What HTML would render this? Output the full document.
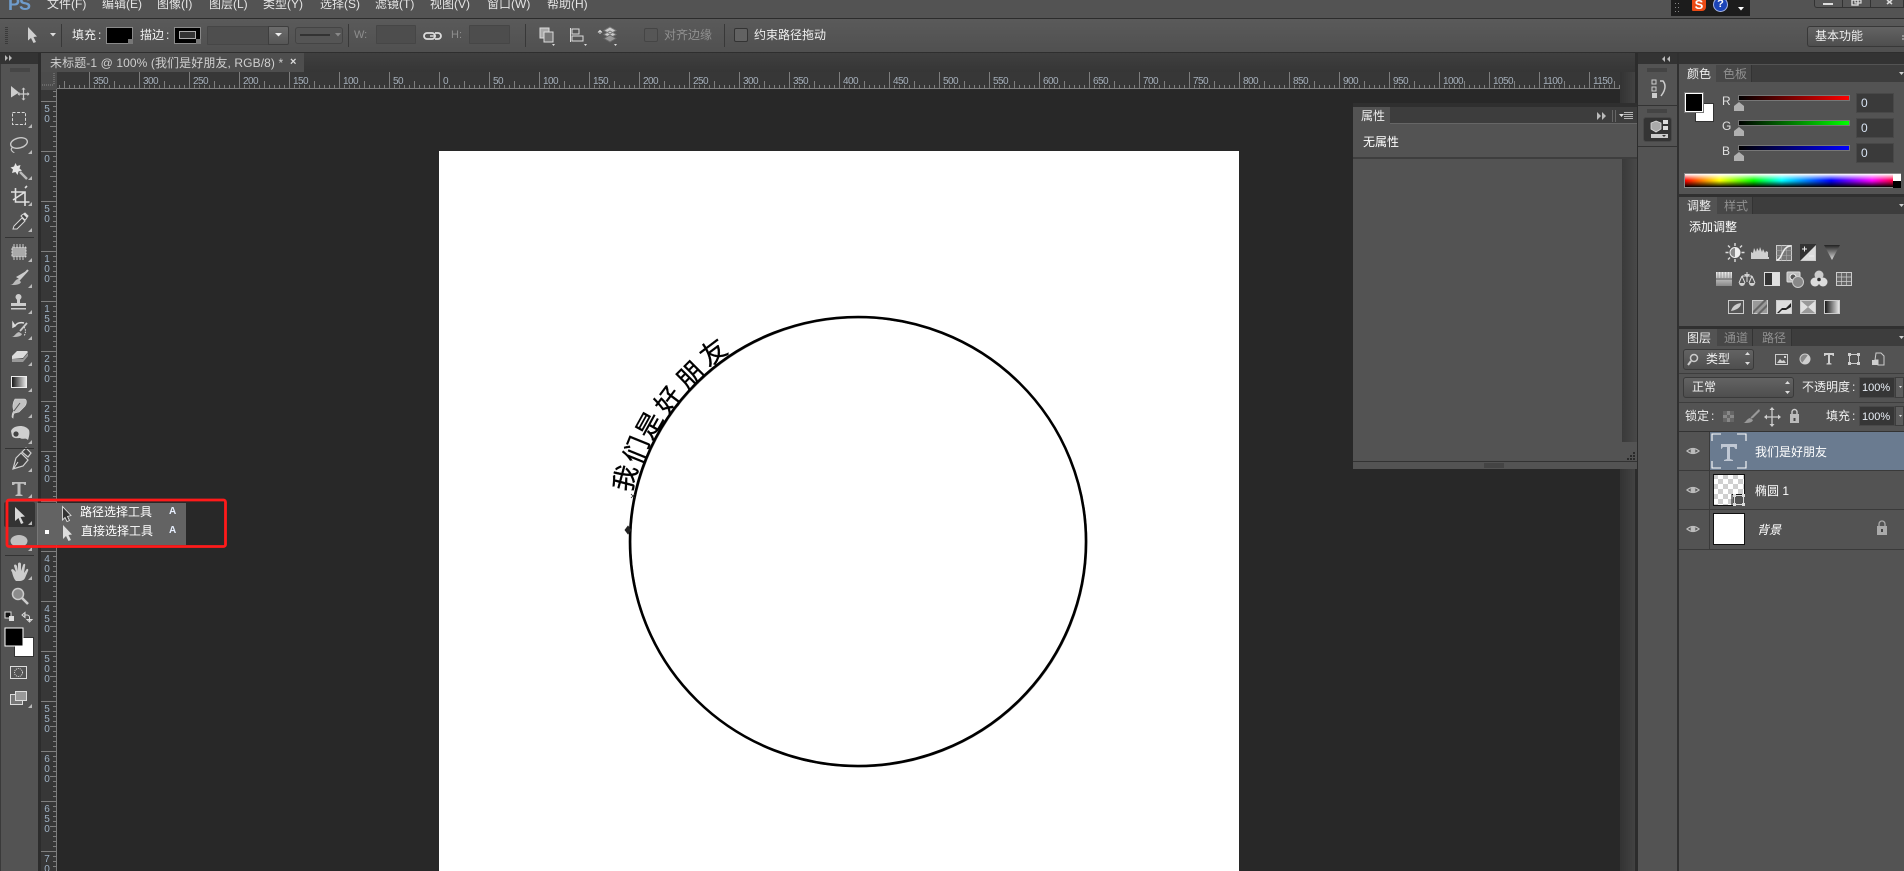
<!DOCTYPE html>
<html><head><meta charset="utf-8"><style>
html,body{margin:0;padding:0;width:1904px;height:871px;overflow:hidden;background:#282828}
body{position:relative;font-family:"Liberation Sans","WenQuanYi Zen Hei","Noto Sans CJK SC",sans-serif;font-size:12px;color:#e4e4e4}
.b{position:absolute;box-sizing:border-box}
.t{position:absolute;white-space:nowrap;line-height:14px;font-size:12px}
.ip{position:absolute;box-sizing:border-box;background:#4d4d4d;border:1px solid #464646;border-radius:1px}
.val{position:absolute;box-sizing:border-box;background:#3a3a3a;border:1px solid #484848;color:#d8e4f4;line-height:19px;padding-left:4px;font-size:12px}
svg{position:absolute;left:0;top:0}
text{font-family:"Liberation Sans","WenQuanYi Zen Hei","Noto Sans CJK SC",sans-serif}
</style></head><body>

<!-- menu + options -->
<div class="b" style="left:0;top:0;width:1904px;height:18px;background:#535353"></div>
<div class="b" style="left:0;top:18px;width:1904px;height:1px;background:#2c2c2c"></div>
<div class="b" style="left:0;top:19px;width:1904px;height:33px;background:linear-gradient(#5a5a5a,#505050)"></div>
<div class="b" style="left:0;top:52px;width:1904px;height:1px;background:#2e2e2e"></div>
<div class="t" style="left:8px;top:-5px;font-size:18px;font-weight:bold;color:#6f9ccc;line-height:18px;letter-spacing:-1px">PS</div>
<div class="t" style="left:47px;top:-3px">文件(F)</div>
<div class="t" style="left:102px;top:-3px">编辑(E)</div>
<div class="t" style="left:157px;top:-3px">图像(I)</div>
<div class="t" style="left:209px;top:-3px">图层(L)</div>
<div class="t" style="left:263px;top:-3px">类型(Y)</div>
<div class="t" style="left:320px;top:-3px">选择(S)</div>
<div class="t" style="left:375px;top:-3px">滤镜(T)</div>
<div class="t" style="left:430px;top:-3px">视图(V)</div>
<div class="t" style="left:487px;top:-3px">窗口(W)</div>
<div class="t" style="left:547px;top:-3px">帮助(H)</div>

<div class="t" style="left:72px;top:28px;color:#f0f0f0">填充<span style="margin-left:2px">:</span></div>
<div class="b" style="left:106px;top:27px;width:27px;height:17px;background:#000;border:1px solid #8a8a8a"></div>
<div class="t" style="left:140px;top:28px;color:#f0f0f0">描边<span style="margin-left:2px">:</span></div>
<div class="b" style="left:174px;top:27px;width:27px;height:17px;background:#000;border:1px solid #8a8a8a"></div>
<div class="b" style="left:179px;top:31px;width:17px;height:8px;border:1px solid #aaa;background:#333"></div>
<div class="ip" style="left:207px;top:26px;width:62px;height:19px;background:#4e4e4e"></div>
<div class="b" style="left:268px;top:26px;width:21px;height:19px;background:linear-gradient(#6c6c6c,#565656);border:1px solid #3e3e3e;border-radius:0 2px 2px 0"></div>
<div class="b" style="left:295px;top:27px;width:48px;height:17px;background:#555;border:1px solid #444;border-radius:3px"></div>
<div class="t" style="left:354px;top:28px;color:#8e8e8e;font-size:11px">W:</div>
<div class="ip" style="left:376px;top:25px;width:40px;height:19px"></div>
<div class="t" style="left:451px;top:28px;color:#8e8e8e;font-size:11px">H:</div>
<div class="ip" style="left:469px;top:25px;width:41px;height:19px"></div>
<div class="b" style="left:644px;top:28px;width:14px;height:14px;background:#565656;border:1px solid #454545;border-radius:2px"></div>
<div class="t" style="left:664px;top:28px;color:#909090">对齐边缘</div>
<div class="b" style="left:734px;top:28px;width:14px;height:14px;background:#626262;border:1px solid #333;border-radius:2px"></div>
<div class="t" style="left:754px;top:28px;color:#f0f0f0">约束路径拖动</div>

<!-- tray -->
<div class="b" style="left:1671px;top:0;width:79px;height:16px;background:#1c1c1c"></div>
<div class="b" style="left:1692px;top:0;width:14px;height:11px;background:#ec4a14;border-radius:0 0 4px 1px;color:#fff;font-weight:bold;font-size:13px;line-height:9px;text-align:center">S</div>
<div class="b" style="left:1713px;top:-3px;width:15px;height:15px;border-radius:50%;background:#1c45b8;border:1px solid #a8b8e8;color:#fff;font-weight:bold;font-size:11px;line-height:13px;text-align:center">?</div>
<div class="b" style="left:1814px;top:0;width:90px;height:8px;background:#565656;border:1px solid #333;border-top:0;border-radius:0 0 0 3px"></div>
<div class="b" style="left:1842px;top:0;width:1px;height:8px;background:#333"></div>
<div class="b" style="left:1870px;top:0;width:1px;height:8px;background:#333"></div>
<div class="b" style="left:1807px;top:26px;width:97px;height:21px;background:linear-gradient(#636363,#4e4e4e);border:1px solid #383838;border-right:0;border-radius:3px 0 0 3px"></div>
<div class="t" style="left:1815px;top:29px;color:#f0f0f0">基本功能</div>

<!-- doc tab strip -->
<div class="b" style="left:0;top:53px;width:1637px;height:19px;background:linear-gradient(#3f3f3f,#363636)"></div>
<div class="b" style="left:41px;top:53px;width:263px;height:20px;background:#4e4e4e"></div>
<div class="t" style="left:50px;top:56px;color:#cfcfcf;letter-spacing:.1px">未标题-1 @ 100% (我们是好朋友, RGB/8) *</div>
<div class="t" style="left:290px;top:55px;color:#ddd;font-size:11px;font-weight:bold">×</div>

<!-- left toolbar -->
<div class="b" style="left:38px;top:53px;width:3px;height:818px;background:#2c2c2c"></div>
<div class="b" style="left:0;top:53px;width:38px;height:11px;background:#333"></div>
<div class="b" style="left:0;top:64px;width:38px;height:807px;background:#535353;border-left:1px solid #3a3a3a"></div>

<!-- rulers -->
<div class="b" style="left:57px;top:72px;width:1563px;height:17px;background:#373737"></div>
<div class="b" style="left:41px;top:89px;width:16px;height:782px;background:#373737"></div>
<div class="b" style="left:41px;top:72px;width:16px;height:18px;background:#4c4c4c"></div>
<div class="b" style="left:1620px;top:72px;width:17px;height:31px;background:linear-gradient(90deg,#333,#444)"></div>
<div class="b" style="left:1620px;top:469px;width:17px;height:402px;background:linear-gradient(90deg,#333,#444)"></div>
<div class="b" style="left:1635px;top:53px;width:3px;height:818px;background:#2c2c2c"></div>

<!-- canvas -->
<div class="b" style="left:439px;top:151px;width:800px;height:720px;background:#fff"></div>

<!-- properties -->
<div class="b" style="left:1353px;top:103px;width:284px;height:366px;background:#535353"></div>
<div class="b" style="left:1353px;top:103px;width:284px;height:4px;background:#2f2f2f"></div>
<div class="b" style="left:1353px;top:107px;width:284px;height:17px;background:#3d3d3d;border-bottom:1px solid #666"></div>
<div class="b" style="left:1353px;top:107px;width:37px;height:18px;background:#535353"></div>
<div class="t" style="left:1361px;top:109px;color:#eee">属性</div>
<div class="t" style="left:1363px;top:135px;color:#fff">无属性</div>
<div class="b" style="left:1353px;top:157px;width:284px;height:2px;background:#3e3e3e"></div>
<div class="b" style="left:1622px;top:159px;width:15px;height:283px;background:linear-gradient(90deg,#3a3a3a,#484848)"></div>
<div class="b" style="left:1353px;top:461px;width:284px;height:1px;background:#333"></div>

<!-- right dock -->
<div class="b" style="left:1638px;top:53px;width:266px;height:11px;background:#333"></div>
<div class="b" style="left:1638px;top:64px;width:40px;height:807px;background:#535353"></div>
<div class="b" style="left:1638px;top:105px;width:40px;height:1px;background:#333"></div>
<div class="b" style="left:1638px;top:146px;width:40px;height:1px;background:#333"></div>
<div class="b" style="left:1643px;top:117px;width:29px;height:25px;background:#343434;border-radius:3px;border:1px solid #484848"></div>
<div class="b" style="left:1677px;top:53px;width:2px;height:818px;background:#303030"></div>

<div class="b" style="left:1679px;top:64px;width:225px;height:130px;background:#535353"></div>
<div class="b" style="left:1679px;top:65px;width:225px;height:17px;background:#3d3d3d"></div>
<div class="b" style="left:1679px;top:65px;width:37px;height:18px;background:#535353"></div>
<div class="b" style="left:1716px;top:65px;width:36px;height:17px;background:#474747;border-right:1px solid #333"></div>
<div class="t" style="left:1687px;top:67px;color:#eee">颜色</div>
<div class="t" style="left:1723px;top:67px;color:#909090">色板</div>

<div class="b" style="left:1695px;top:103px;width:19px;height:19px;background:#fff;border:1px solid #333"></div>
<div class="b" style="left:1685px;top:93px;width:18px;height:19px;background:#000;border:1px solid #fff;outline:1px solid #777"></div>
<div class="t" style="left:1722px;top:94px;color:#e0e0e0">R</div>
<div class="b" style="left:1738px;top:95px;width:112px;height:6px;background:linear-gradient(90deg,#000,#f00);border:1px solid #777"></div>
<div class="val" style="left:1856px;top:93px;width:38px;height:20px">0</div>
<div class="t" style="left:1722px;top:119px;color:#e0e0e0">G</div>
<div class="b" style="left:1738px;top:120px;width:112px;height:6px;background:linear-gradient(90deg,#000,#0f0);border:1px solid #777"></div>
<div class="val" style="left:1856px;top:118px;width:38px;height:20px">0</div>
<div class="t" style="left:1722px;top:144px;color:#e0e0e0">B</div>
<div class="b" style="left:1738px;top:145px;width:112px;height:6px;background:linear-gradient(90deg,#000,#00f);border:1px solid #777"></div>
<div class="val" style="left:1856px;top:143px;width:38px;height:20px">0</div>
<div class="b" style="left:1684px;top:173px;width:217px;height:15px;background:linear-gradient(#fff 0%,#fff0 48%,#0000 52%,#000 100%),linear-gradient(90deg,#f00 0%,#ff0 16%,#0f0 32%,#0ff 45%,#00f 68%,#f0f 87%,#f00 100%);border:1px solid #888"></div>
<div class="b" style="left:1893px;top:174px;width:8px;height:7px;background:#fff"></div>
<div class="b" style="left:1893px;top:181px;width:8px;height:7px;background:#000"></div>
<div class="b" style="left:1679px;top:194px;width:225px;height:3px;background:#303030"></div>

<div class="b" style="left:1679px;top:197px;width:225px;height:130px;background:#535353"></div>
<div class="b" style="left:1679px;top:197px;width:225px;height:17px;background:#3d3d3d"></div>
<div class="b" style="left:1679px;top:197px;width:38px;height:18px;background:#535353"></div>
<div class="b" style="left:1717px;top:197px;width:36px;height:17px;background:#474747;border-right:1px solid #333"></div>
<div class="t" style="left:1687px;top:199px;color:#eee">调整</div>
<div class="t" style="left:1724px;top:199px;color:#909090">样式</div>
<div class="t" style="left:1689px;top:220px;color:#fff">添加调整</div>
<div class="b" style="left:1679px;top:326px;width:225px;height:3px;background:#303030"></div>

<div class="b" style="left:1679px;top:329px;width:225px;height:542px;background:#535353"></div>
<div class="b" style="left:1679px;top:329px;width:225px;height:17px;background:#3d3d3d"></div>
<div class="b" style="left:1679px;top:329px;width:38px;height:18px;background:#535353"></div>
<div class="b" style="left:1717px;top:329px;width:36px;height:17px;background:#474747;border-right:1px solid #333"></div>
<div class="b" style="left:1753px;top:329px;width:39px;height:17px;background:#474747;border-right:1px solid #333"></div>
<div class="t" style="left:1687px;top:331px;color:#eee">图层</div>
<div class="t" style="left:1724px;top:331px;color:#909090">通道</div>
<div class="t" style="left:1762px;top:331px;color:#909090">路径</div>

<div class="b" style="left:1683px;top:349px;width:71px;height:21px;background:linear-gradient(#636363,#4e4e4e);border:1px solid #3a3a3a;border-radius:3px"></div>
<div class="t" style="left:1706px;top:352px;color:#f0f0f0">类型</div>
<div class="b" style="left:1679px;top:373px;width:225px;height:1px;background:#3d3d3d"></div>
<div class="b" style="left:1683px;top:377px;width:111px;height:21px;background:linear-gradient(#636363,#4e4e4e);border:1px solid #3a3a3a;border-radius:3px"></div>
<div class="t" style="left:1692px;top:380px;color:#f0f0f0">正常</div>
<div class="t" style="left:1802px;top:380px;color:#f0f0f0">不透明度<span style="margin-left:2px">:</span></div>
<div class="b" style="left:1859px;top:377px;width:36px;height:21px;background:#363636;border:1px solid #484848"></div>
<div class="t" style="left:1862px;top:381px;color:#eaf0f8;font-size:11px">100%</div>
<div class="b" style="left:1895px;top:377px;width:9px;height:21px;background:#5c5c5c;border:1px solid #3d3d3d"></div>
<div class="b" style="left:1679px;top:402px;width:225px;height:1px;background:#3d3d3d"></div>
<div class="t" style="left:1685px;top:409px;color:#f0f0f0">锁定<span style="margin-left:2px">:</span></div>
<div class="t" style="left:1826px;top:409px;color:#f0f0f0">填充<span style="margin-left:2px">:</span></div>
<div class="b" style="left:1859px;top:406px;width:36px;height:20px;background:#363636;border:1px solid #484848"></div>
<div class="t" style="left:1862px;top:410px;color:#eaf0f8;font-size:11px">100%</div>
<div class="b" style="left:1895px;top:406px;width:9px;height:20px;background:#5c5c5c;border:1px solid #3d3d3d"></div>
<div class="b" style="left:1679px;top:431px;width:225px;height:1px;background:#333"></div>
<div class="b" style="left:1710px;top:432px;width:194px;height:38px;background:#6a7b90"></div>
<div class="b" style="left:1679px;top:470px;width:225px;height:1px;background:#3a3a3a"></div>
<div class="b" style="left:1679px;top:509px;width:225px;height:1px;background:#3a3a3a"></div>
<div class="b" style="left:1679px;top:549px;width:225px;height:1px;background:#3a3a3a"></div>
<div class="b" style="left:1709px;top:432px;width:1px;height:117px;background:#3a3a3a"></div>
<div class="t" style="left:1755px;top:445px;color:#fff">我们是好朋友</div>
<div class="t" style="left:1755px;top:484px;color:#fff">椭圆 1</div>
<div class="t" style="left:1757px;top:523px;color:#fff;font-style:italic">背景</div>
<div class="b" style="left:1713px;top:513px;width:32px;height:32px;background:#fff;border:1px solid #111"></div>

<!-- overlay graphics -->
<svg width="1904" height="871" viewBox="0 0 1904 871">
<defs>
<pattern id="ph" patternUnits="userSpaceOnUse" width="50" height="17" x="439" y="72">
<rect x="0" y="0" width="1" height="17" fill="#7e7e7e"/>
<rect x="25" y="9" width="1" height="8" fill="#7e7e7e"/>
<rect x="5" y="13" width="1" height="4" fill="#7e7e7e"/><rect x="10" y="13" width="1" height="4" fill="#7e7e7e"/><rect x="15" y="13" width="1" height="4" fill="#7e7e7e"/><rect x="20" y="13" width="1" height="4" fill="#7e7e7e"/><rect x="30" y="13" width="1" height="4" fill="#7e7e7e"/><rect x="35" y="13" width="1" height="4" fill="#7e7e7e"/><rect x="40" y="13" width="1" height="4" fill="#7e7e7e"/><rect x="45" y="13" width="1" height="4" fill="#7e7e7e"/>
</pattern>
<pattern id="pv" patternUnits="userSpaceOnUse" width="16" height="50" x="41" y="151">
<rect x="0" y="0" width="16" height="1" fill="#7e7e7e"/>
<rect x="9" y="25" width="7" height="1" fill="#7e7e7e"/>
<rect x="12" y="5" width="4" height="1" fill="#7e7e7e"/><rect x="12" y="10" width="4" height="1" fill="#7e7e7e"/><rect x="12" y="15" width="4" height="1" fill="#7e7e7e"/><rect x="12" y="20" width="4" height="1" fill="#7e7e7e"/><rect x="12" y="30" width="4" height="1" fill="#7e7e7e"/><rect x="12" y="35" width="4" height="1" fill="#7e7e7e"/><rect x="12" y="40" width="4" height="1" fill="#7e7e7e"/><rect x="12" y="45" width="4" height="1" fill="#7e7e7e"/>
</pattern>
<pattern id="chk" patternUnits="userSpaceOnUse" width="10" height="10" x="1713" y="474">
<rect width="10" height="10" fill="#fff"/><rect width="5" height="5" fill="#cfcfcf"/><rect x="5" y="5" width="5" height="5" fill="#cfcfcf"/>
</pattern>
<linearGradient id="g1"><stop offset="0" stop-color="#111"/><stop offset="1" stop-color="#eee"/></linearGradient>
<linearGradient id="g2" x2="0" y2="1"><stop offset="0" stop-color="#eee"/><stop offset="1" stop-color="#888"/></linearGradient>
<linearGradient id="g3" x2="0" y2="1"><stop offset="0" stop-color="#222"/><stop offset="1" stop-color="#ddd"/></linearGradient>
</defs>

<!-- ruler ticks -->
<rect x="57" y="72" width="1563" height="17" fill="url(#ph)"/>
<rect x="57" y="88" width="1563" height="1" fill="#7c7c7c"/>
<rect x="41" y="89" width="16" height="782" fill="url(#pv)"/>
<rect x="56" y="89" width="1" height="782" fill="#7c7c7c"/>
<path d="M54 73V85M42 85H54" stroke="#888" stroke-dasharray="1 1" fill="none"/>

<!-- h ruler labels -->
<g font-size="10" fill="#a6b0bb" letter-spacing="-.55">
<text x="93" y="84">350</text><text x="143" y="84">300</text><text x="193" y="84">250</text><text x="243" y="84">200</text><text x="293" y="84">150</text><text x="343" y="84">100</text><text x="393" y="84">50</text><text x="443" y="84">0</text><text x="493" y="84">50</text><text x="543" y="84">100</text><text x="593" y="84">150</text><text x="643" y="84">200</text><text x="693" y="84">250</text><text x="743" y="84">300</text><text x="793" y="84">350</text><text x="843" y="84">400</text><text x="893" y="84">450</text><text x="943" y="84">500</text><text x="993" y="84">550</text><text x="1043" y="84">600</text><text x="1093" y="84">650</text><text x="1143" y="84">700</text><text x="1193" y="84">750</text><text x="1243" y="84">800</text><text x="1293" y="84">850</text><text x="1343" y="84">900</text><text x="1393" y="84">950</text><text x="1443" y="84">1000</text><text x="1493" y="84">1050</text><text x="1543" y="84">1100</text><text x="1593" y="84">1150</text>
</g>
<!-- v ruler labels -->
<g font-size="10" fill="#9fb2c6" text-anchor="middle">
<text x="47" y="112">5</text><text x="47" y="122">0</text>
<text x="47" y="162">0</text>
<text x="47" y="212">5</text><text x="47" y="222">0</text>
<text x="47" y="262">1</text><text x="47" y="272">0</text><text x="47" y="282">0</text>
<text x="47" y="312">1</text><text x="47" y="322">5</text><text x="47" y="332">0</text>
<text x="47" y="362">2</text><text x="47" y="372">0</text><text x="47" y="382">0</text>
<text x="47" y="412">2</text><text x="47" y="422">5</text><text x="47" y="432">0</text>
<text x="47" y="462">3</text><text x="47" y="472">0</text><text x="47" y="482">0</text>
<text x="47" y="512">3</text><text x="47" y="522">5</text><text x="47" y="532">0</text>
<text x="47" y="562">4</text><text x="47" y="572">0</text><text x="47" y="582">0</text>
<text x="47" y="612">4</text><text x="47" y="622">5</text><text x="47" y="632">0</text>
<text x="47" y="662">5</text><text x="47" y="672">0</text><text x="47" y="682">0</text>
<text x="47" y="712">5</text><text x="47" y="722">5</text><text x="47" y="732">0</text>
<text x="47" y="762">6</text><text x="47" y="772">0</text><text x="47" y="782">0</text>
<text x="47" y="812">6</text><text x="47" y="822">5</text><text x="47" y="832">0</text>
<text x="47" y="862">7</text><text x="47" y="872">0</text>
</g>

<!-- canvas art -->
<ellipse cx="858.800" cy="542.300" rx="228" ry="224.500" fill="none" stroke="#777" stroke-width="1.200"/>
<ellipse cx="858" cy="541.500" rx="228" ry="224.500" fill="none" stroke="#000" stroke-width="2.600"/>
<path d="M625 530l3-4 3 4-3 4zM631 494l4 4M635 494l-4 4" fill="#222" stroke="#222" stroke-width=".8"/>
<g font-size="26" fill="#000" stroke="#000" stroke-width=".35" text-anchor="middle" style="font-family:'Noto Sans CJK SC',sans-serif">
<text transform="translate(625 478) rotate(-75)" y="9.500">我</text>
<text transform="translate(636 450) rotate(-68)" y="9.500">们</text>
<text transform="translate(649 425) rotate(-61)" y="9.500">是</text>
<text transform="translate(668 400) rotate(-53)" y="9.500">好</text>
<text transform="translate(690 375) rotate(-45)" y="9.500">朋</text>
<text transform="translate(713 352) rotate(-37)" y="9.500">友</text>
</g>

<!-- options icons -->
<g fill="#3a3a3a"><rect x="5" y="27" width="3" height="1"/><rect x="5" y="29" width="3" height="1"/><rect x="5" y="31" width="3" height="1"/><rect x="5" y="33" width="3" height="1"/><rect x="5" y="35" width="3" height="1"/><rect x="5" y="37" width="3" height="1"/><rect x="5" y="39" width="3" height="1"/><rect x="5" y="41" width="3" height="1"/><rect x="5" y="43" width="3" height="1"/></g>
<path d="M28 27L37 36.500L33.500 37L36 42L33.500 43L31 38L28 40.500Z" fill="#cfcfcf"/>
<path d="M50 33h6l-3 3.500z" fill="#ddd"/>
<g fill="#383838"><rect x="61" y="24" width="1" height="23"/><rect x="348" y="24" width="1" height="23"/><rect x="525" y="24" width="1" height="23"/><rect x="724" y="24" width="1" height="23"/></g>
<path d="M128 39h5v5h-5zM196 39h5v5h-5z" fill="#777"/>
<path d="M275 33h7l-3.500 3.500z" fill="#eee"/>
<path d="M300 35h30" stroke="#333" stroke-width="2"/><path d="M335 33h6l-3 3.500z" fill="#888"/>
<path d="M427 33h5a3 3 0 0 1 0 6h-5a3 3 0 0 1 0-6zM435 33h3a3 3 0 0 1 0 6h-3" fill="none" stroke="#ddd" stroke-width="1.800"/><path d="M430 36h6" stroke="#ddd" stroke-width="1.400"/>
<rect x="540" y="28" width="9" height="10" fill="#aaa" stroke="#ddd"/><rect x="544" y="32" width="9" height="10" fill="#777" stroke="#ddd"/><path d="M552 44h3l-1.500 2z" fill="#ddd"/>
<path d="M570.500 28v14" stroke="#ddd"/><rect x="572" y="29" width="7" height="5" fill="#555" stroke="#ddd"/><rect x="572" y="36" width="11" height="5" fill="#555" stroke="#ddd"/><path d="M584 44h3l-1.500 2z" fill="#ddd"/>
<path d="M610 27l6 3.500-6 3.500-6-3.500zM610 31l6 3.500-6 3.500-6-3.500z" fill="#ccc" stroke="#777"/><path d="M610 35l6 3.500-6 3.500-6-3.500z" fill="#999" stroke="#666"/><path d="M600 34v-3m-2 1.500l2-2 2 2" fill="none" stroke="#ddd"/><path d="M614 44h3l-1.500 2z" fill="#ddd"/>
<!-- tray & window -->
<path d="M1738 7h6l-3 3.500z" fill="#fff"/>
<g fill="#888"><rect x="1675" y="3" width="1" height="1"/><rect x="1678" y="3" width="1" height="1"/><rect x="1675" y="7" width="1" height="1"/><rect x="1678" y="7" width="1" height="1"/><rect x="1675" y="11" width="1" height="1"/><rect x="1678" y="11" width="1" height="1"/></g>
<rect x="1823" y="3" width="10" height="2" fill="#ddd"/><rect x="1852" y="0" width="6" height="5" fill="none" stroke="#ddd" stroke-width="1.400"/><rect x="1855" y="0" width="6" height="3" fill="none" stroke="#ddd" stroke-width="1.200"/>
<path d="M1887 0l5 4M1892 0l-5 4" stroke="#ddd" stroke-width="1.600"/>
<path d="M1902 36h3" stroke="#ccc"/><path d="M1902 39h3" stroke="#ccc"/>

<!-- doc strip arrows -->
<path d="M5 55l3 3-3 3zM9 55l3 3-3 3z" fill="#bbb"/>
<g fill="#2e2e2e"><rect x="10" y="68" width="20" height="4"/></g>
<path d="M11 68v4M13 68v4M15 68v4M17 68v4M19 68v4M21 68v4M23 68v4M25 68v4M27 68v4M29 68v4" stroke="#6a6a6a" stroke-width=".8"/>

<!-- left tools -->
<g fill="#cdcdcd" stroke="none">
<path d="M11 86l8 6.500-8 5z"/>
<path d="M23.500 89v10M19 94h9" stroke="#ccc" stroke-width="1.200" fill="none"/><path d="M23.500 87.500l-2 2h4zM23.500 100.500l-2-2h4zM17.500 94l2 2v-4zM29.500 94l-2 2v-4z"/>
<rect x="12.500" y="112.500" width="13" height="12" fill="none" stroke="#d8d8d8" stroke-dasharray="3 1.600"/>
<ellipse cx="19" cy="143" rx="8.500" ry="5" transform="rotate(-14 19 143)" fill="none" stroke="#c8c8c8" stroke-width="1.400"/><path d="M13 147q-3 2-1 4t2 1" fill="none" stroke="#c8c8c8" stroke-width="1.200"/>
<path d="M15.500 163l1.500 3 3.500-1-1 3.500 2.500 2-3.500 1-1 3.500-2-3-3.500 1 1-3.500-2.500-2 3.500-1z" fill="#e6e6e6"/><path d="M20 172l7 7" stroke="#bbb" stroke-width="2.400"/>
<path d="M15.500 188v14h14M11 192h14v14M13 200l12-8M25 188l2-2" fill="none" stroke="#e0e0e0" stroke-width="1.600"/>
<path d="M13 229l1-3 8-8 3 3-8 8zM22 215l3-2 3 3-2 3-1 1-4-4z" fill="#444" stroke="#d8d8d8" stroke-width="1"/><path d="M23 214l4 4 1-2-3-3z" fill="#ddd"/>
<rect x="12" y="247" width="14" height="10" rx="1" fill="#aaa" stroke="#ddd" stroke-dasharray="2 1"/><path d="M14 244v2M17 244v2M20 244v2M23 244v2M14 258v2M17 258v2M20 258v2M23 258v2" stroke="#ccc"/>
<path d="M28 270L19 279L16 277Z" fill="#ccc"/><path d="M28 270l-10 11" stroke="#ccc" stroke-width="2"/><path d="M10 285c4 0 4-5 8-6l3 3c-1 3-6 3-11 3z" fill="#bbb"/>
<circle cx="18.500" cy="297" r="3"/><rect x="17" y="298" width="3" height="5"/><path d="M11 303h15v3H11z"/><rect x="11" y="308" width="15" height="1.500"/>
<path d="M15 326c2-3 5-4 9-3M15 326l-2-3v4z" fill="none" stroke="#ddd" stroke-width="1.500"/><path d="M27 323l-7 8" stroke="#ccc" stroke-width="1.800"/><path d="M11 337c4 0 4-4 8-5l3 2c-1 3-6 3-11 3z" fill="#bbb"/><path d="M24 327q3 4 0 9" stroke="#ddd" stroke-dasharray="1.500 1" fill="none"/>
<path d="M17 351h10l1 1-5 6-11 1v-3z" fill="#ddd"/><path d="M12 359v3h11l5-6v-3l-5 6z" fill="#999"/>
<rect x="11.500" y="376.500" width="15" height="11" fill="url(#g1)" stroke="#eee"/>
<path d="M15 399h9c3 0 3 4 1 7l-5 5-1 1-4 1c0-1-2 1-2 5l-1-1c0-3 1-5 2-6-2-4-1-9 1-12z" fill="#c2c2c2" stroke="#ddd" stroke-width=".6"/><path d="M20 403l-6 8" stroke="#555"/>
<path d="M11 431c2-6 14-7 18-1 1 3 0 7-1 10-3-3-5 0-8-2-2 0-6 1-8-2z" fill="#cfcfcf"/><circle cx="16" cy="434" r="2.600" fill="#444"/>
<path d="M21 453l-5 5-3 11 3-1 7-2 5-6zM22 452l4-4 5 5-3 4z" fill="#444" stroke="#d0d0d0" stroke-width="1.200"/><path d="M14 468l4-6" stroke="#ddd"/>
<path d="M12 482h14v3h-1.500l-1-1.200H20.500v10.500l2 .7v1H15.500v-1l2-.7V483.800h-2.500l-1 1.200H12z" fill="#bdbdbd"/>
</g>
<rect x="4" y="502" width="31" height="25" rx="2" fill="#333"/>
<path d="M15 507l10 9.500-4.500.5 3 6-2.500 1-2.500-6-3.500 3z" fill="#d8d8d8"/>
<ellipse cx="19" cy="541" rx="8.500" ry="6" fill="#c0c0c0"/>
<g fill="#cdcdcd">
<path d="M12 572c-2-2 0-4 2-2l2 2-2-6c0-2 2-2 3 0l1 5v-7c0-2 3-2 3 0v7l2-6c1-2 3-1 2 1l-1 7 2-3c1-2 3-1 2 1l-3 7c-1 2-3 3-6 3h-3c-2-2-3-5-4-9z"/>
<circle cx="18" cy="594" r="5.500" fill="#8c8c8c" stroke="#ccc" stroke-width="1.500"/><path d="M22 598l6 6" stroke="#ccc" stroke-width="2.600"/>
</g>
<rect x="5" y="612" width="6" height="6" fill="#111" stroke="#ddd"/><rect x="9" y="616" width="5" height="5" fill="#ddd"/>
<path d="M24 615h3a2.500 2.500 0 0 1 2.500 2.500V621M22 615l3-2.500v5zM29.500 622l-2.500-2.500h5z" fill="none" stroke="#ddd" stroke-width="1"/>
<rect x="14.500" y="637.500" width="19" height="19" fill="#fff" stroke="#333"/>
<rect x="5" y="628" width="18" height="18" fill="#000" stroke="#fff" stroke-width="1"/>
<rect x="10.500" y="666.500" width="16" height="12" fill="#555" stroke="#ddd"/><circle cx="18.500" cy="672.500" r="4" fill="none" stroke="#ddd" stroke-dasharray="1 1"/>
<rect x="10.500" y="694.500" width="12" height="10" fill="#777" stroke="#ddd"/><rect x="15.500" y="691.500" width="11" height="9" fill="#999" stroke="#ddd"/>
<rect x="5" y="237" width="29" height="1" fill="#333"/><rect x="5" y="448" width="29" height="1" fill="#333"/><rect x="5" y="555" width="29" height="1" fill="#333"/>
<g fill="#bbb">
<path d="M32 124v4h-4z"/><path d="M32 150v4h-4z"/><path d="M32 176v4h-4z"/><path d="M32 202v4h-4z"/><path d="M32 228v4h-4z"/><path d="M32 258v4h-4z"/><path d="M32 284v4h-4z"/><path d="M32 310v4h-4z"/><path d="M32 336v4h-4z"/><path d="M32 362v4h-4z"/><path d="M32 388v4h-4z"/><path d="M32 414v4h-4z"/><path d="M32 440v4h-4z"/><path d="M32 468v4h-4z"/><path d="M32 494v4h-4z"/><path d="M32 521v4h-4z"/><path d="M32 547v4h-4z"/><path d="M32 576v4h-4z"/><path d="M32 704v4h-4z"/>
</g>

<!-- properties chrome -->
<path d="M1597 112l4 4-4 4zM1602 112l4 4-4 4z" fill="#bbb"/><path d="M1612.500 110v12M1615.500 110v12" stroke="#666"/>
<path d="M1619 114h5l-2.500 3z" fill="#ddd"/><path d="M1624 112.500h9M1624 114.500h9M1624 116.500h9M1624 118.500h9" stroke="#ddd" stroke-width=".8"/>
<g fill="#2a2a2a"><path d="M1633 452h2v2h-2zM1630 455h2v2h-2zM1633 455h2v2h-2zM1627 458h2v2h-2zM1630 458h2v2h-2zM1633 458h2v2h-2z"/></g>
<path d="M1485 463v5M1487 463v5M1489 463v5M1491 463v5M1493 463v5M1495 463v5M1497 463v5M1499 463v5M1501 463v5M1503 463v5" stroke="#2e2e2e" stroke-width=".8"/>

<!-- right dock icons -->
<path d="M1665 56l-3 3 3 3zM1670 56l-3 3 3 3z" fill="#bbb"/>
<path d="M1648 68v4M1650 68v4M1652 68v4M1654 68v4M1656 68v4M1658 68v4M1660 68v4M1662 68v4M1664 68v4M1666 68v4" stroke="#2e2e2e" stroke-width=".8"/>
<path d="M1648 109v4M1650 109v4M1652 109v4M1654 109v4M1656 109v4M1658 109v4M1660 109v4M1662 109v4M1664 109v4M1666 109v4" stroke="#2e2e2e" stroke-width=".8"/>
<rect x="1652" y="80" width="4" height="4" fill="none" stroke="#ccc"/><rect x="1652" y="87" width="4" height="4" fill="none" stroke="#ccc"/><rect x="1652" y="93" width="5" height="5" fill="#ccc"/><path d="M1660 81h3q4 5 0 12l-2 3" fill="none" stroke="#ccc" stroke-width="1.500"/>
<path d="M1656 121l5 2v6l-5 3-5-3v-6z" fill="#aaa" stroke="#ddd" stroke-width=".8"/><rect x="1663" y="120" width="5" height="4" fill="#ddd"/><rect x="1663" y="126" width="5" height="4" fill="#ddd"/><rect x="1651" y="134" width="17" height="4" fill="#ccc"/><path d="M1662 135h4l-2 2z" fill="#333"/>

<!-- color sliders -->
<path d="M1739 102l5 4v5h-10v-5z" fill="#b0b0b0"/><path d="M1739 127l5 4v5h-10v-5z" fill="#b0b0b0"/><path d="M1739 152l5 4v5h-10v-5z" fill="#b0b0b0"/>
<path d="M1899 72l5 0-2.500 3z" fill="#ccc"/><path d="M1899 204h5l-2.500 3z" fill="#ccc"/><path d="M1899 336h5l-2.500 3z" fill="#ccc"/>

<!-- adjustment icons -->
<g fill="#d0d0d0" stroke="none">
<circle cx="1735" cy="252.500" r="5" fill="#888" stroke="#eee"/><path d="M1735 247.500a5 5 0 0 1 0 10z" fill="#eee"/>
<path d="M1735 243v3M1735 259v3M1725.500 252.500h3M1741.500 252.500h3M1728 245.500l2 2M1740 257.500l2 2M1728 259.500l2-2M1740 247.500l2-2" stroke="#ddd" stroke-width="1.400"/>
<path d="M1751 257v-5l2 1 1-5 2 4 1-4 2 3 1-4 2 5 1-3 2 4 1-2 2 1v5z"/><rect x="1751" y="257" width="18" height="2"/>
<rect x="1776.500" y="245.500" width="15" height="15" fill="#777" stroke="#ccc"/><path d="M1781.500 245v16M1786.500 245v16M1776 250.500h16M1776 255.500h16" stroke="#aaa" stroke-width=".6"/><path d="M1777 260c5 0 5-14 14-14" fill="none" stroke="#eee" stroke-width="1.500"/>
<rect x="1800.500" y="245.500" width="15" height="15" fill="#ddd" stroke="#ccc"/><path d="M1800 261l16-16v-1h-16z" fill="#333"/><path d="M1802 249h5M1804.500 246.500v5M1809 256h5" stroke="#eee"/>
<path d="M1824 245h16l-8 15z" fill="url(#g3)"/>
<rect x="1716" y="272" width="16" height="14" fill="url(#g2)"/><path d="M1716 279h16" stroke="#555"/><path d="M1718 272v7M1721 272v7M1724 272v7M1727 272v7M1730 272v7" stroke="#888" stroke-width=".8"/>
<path d="M1747 272v10M1742 276h10M1742 276l-3 7M1742 276l3 7M1752 276l-3 7M1752 276l3 7" stroke="#ddd" fill="none"/><path d="M1739 283a3 3 0 0 0 6 0zM1749 283a3 3 0 0 0 6 0z"/><path d="M1744 274h6l-3 4z"/>
<rect x="1764.500" y="272.500" width="15" height="13" fill="#e0e0e0" stroke="#ddd"/><rect x="1765" y="273" width="7" height="12" fill="#333"/>
<rect x="1787" y="272" width="13" height="10" rx="1" fill="#bbb" stroke="#ddd"/><circle cx="1793" cy="277" r="3" fill="#555" stroke="#eee"/><circle cx="1798" cy="282" r="5.500" fill="#888" stroke="#ccc"/>
<circle cx="1819" cy="275" r="4.500" fill="#ccc"/><circle cx="1815" cy="282" r="4.500" fill="#ddd"/><circle cx="1823" cy="282" r="4.500" fill="#ddd"/><circle cx="1819" cy="279.500" r="1.800" fill="#333"/>
<rect x="1836.500" y="272.500" width="15" height="13" fill="#666" stroke="#ccc"/><path d="M1841.500 272v14M1846.500 272v14M1836 277h16M1836 281.500h16" stroke="#ccc" stroke-width=".7"/>
<rect x="1728.500" y="300.500" width="15" height="13" fill="#555" stroke="#ccc"/><path d="M1731 311q2-7 10-8 0 6-10 8z" fill="#ccc"/>
<rect x="1752.500" y="300.500" width="15" height="13" fill="#999" stroke="#ccc"/><path d="M1753 311l11-11h3l-14 14zM1757 314l10-10v3l-7 7z" fill="#666"/>
<rect x="1776.500" y="300.500" width="15" height="13" fill="#ddd" stroke="#ccc"/><path d="M1777 313l5-5h4l5-5v4l-5 3h-4l-3 3z" fill="#222"/>
<rect x="1800.500" y="300.500" width="15" height="13" fill="#999" stroke="#ccc"/><path d="M1801 301l7 6-7 6zM1815 301l-7 6 7 6z" fill="#e0e0e0"/>
<rect x="1824.500" y="300.500" width="15" height="13" fill="url(#g1)" stroke="#ccc"/>
</g>

<!-- layers icons -->
<g fill="#cfcfcf">
<circle cx="1694" cy="358" r="3.500" fill="none" stroke="#ccc" stroke-width="1.500"/><path d="M1691 361l-3 4" stroke="#ccc" stroke-width="2"/>
<path d="M1745 355l2.500-3 2.500 3zM1745 362l2.500 3 2.500-3z" fill="#ddd"/>
<rect x="1775.500" y="354.500" width="12" height="10" fill="#555" stroke="#ccc"/><path d="M1777 363l3-4 2 2 2-1 2 3z"/><rect x="1784" y="356" width="2" height="2"/>
<circle cx="1805" cy="359" r="5" fill="#888" stroke="#ccc"/><path d="M1802 363l6-8a5 5 0 0 1-6 8z"/>
<path d="M1824 353h10v3h-1l-1-1h-2v8l1.500.5v1h-5v-1l1.500-.5v-8h-2l-1 1h-1z"/>
<rect x="1849.500" y="354.500" width="9" height="9" fill="none" stroke="#ccc"/><path d="M1848 353h3v3h-3zM1857 353h3v3h-3zM1848 362h3v3h-3zM1857 362h3v3h-3z"/>
<path d="M1876 353h5l3 3v9h-6v-5h-3z" fill="none" stroke="#ccc"/><rect x="1872" y="360" width="6" height="5"/>
<path d="M1785 384l2.500-3 2.500 3zM1785 391l2.500 3 2.500-3z" fill="#ddd"/>
<path d="M1899 386h3l-1.500 2z" fill="#ddd"/><path d="M1899 415h3l-1.500 2z" fill="#ddd"/>
<rect x="1723" y="411" width="11" height="11" fill="#888"/><rect x="1723" y="411" width="4" height="4" fill="#666"/><rect x="1730" y="411" width="4" height="4" fill="#666"/><rect x="1727" y="415" width="3" height="3" fill="#666"/><rect x="1723" y="418" width="4" height="4" fill="#666"/><rect x="1730" y="418" width="4" height="4" fill="#666"/>
<path d="M1759 409l-8 8-1 2 3-1 7-7zM1743 423c3 0 3-4 7-5l3 2c-1 3-5 3-10 3z" fill="#999"/>
<path d="M1772 409v16M1766 417h13" stroke="#ccc" stroke-width="1.300" fill="none"/><path d="M1772 407l-2.500 3h5zM1772 427l-2.500-3h5zM1764 417l3 2.500v-5zM1781 417l-3 2.500v-5z"/>
<rect x="1790" y="414" width="9" height="9" fill="#bbb"/><path d="M1792 414v-2a2.500 2.500 0 0 1 5 0v2" fill="none" stroke="#ccc" stroke-width="1.400"/><rect x="1793.500" y="418" width="2" height="3" fill="#444"/>
</g>
<!-- eyes -->
<g fill="none" stroke="#bcbcbc" stroke-width="1.300">
<path d="M1687 451q6-5 12 0q-6 5-12 0z"/><path d="M1687 490q6-5 12 0q-6 5-12 0z"/><path d="M1687 529q6-5 12 0q-6 5-12 0z"/>
</g>
<circle cx="1693" cy="451" r="2.400" fill="#bbb"/><circle cx="1693" cy="490" r="2.400" fill="#bbb"/><circle cx="1693" cy="529" r="2.400" fill="#bbb"/>
<!-- layer thumbs -->
<path d="M1721 434h-9v7M1737 434h9v7M1712 461v7h9M1746 461v7h-9" fill="none" stroke="#fff" stroke-width="1.100"/>
<path d="M1721 444h16v5h-1.500l-1.500-2h-4v12l3 1v1h-9v-1l3-1v-12h-4l-1.500 2H1721z" fill="#c0c8d4"/>
<rect x="1713.500" y="474.500" width="31" height="31" fill="url(#chk)" stroke="#111"/>
<rect x="1733" y="494" width="12" height="12" fill="#535353"/>
<path d="M1733 494.500h-1v11M1733 494.500h12" stroke="#111" fill="none"/>
<rect x="1734.500" y="495.500" width="9" height="9" fill="none" stroke="#ddd"/><path d="M1733 494h3v3h-3zM1742 494h3v3h-3zM1733 503h3v3h-3zM1742 503h3v3h-3z" fill="#ddd"/>
<rect x="1877" y="526" width="10" height="9" fill="#aaa"/><path d="M1879 526v-2a3 3 0 0 1 6 0v2" fill="none" stroke="#aaa" stroke-width="1.300"/><rect x="1881" y="529" width="2" height="3" fill="#444"/>
</svg>

<!-- flyout -->
<div class="b" style="left:37px;top:503px;width:149px;height:42px;background:#636363;border-left:1px solid #777"></div>
<div class="t" style="left:80px;top:505px;color:#fff">路径选择工具</div>
<div class="t" style="left:81px;top:524px;color:#fff">直接选择工具</div>
<div class="t" style="left:169px;top:505px;color:#e8f0ff;font-size:10px;font-weight:bold">A</div>
<div class="t" style="left:169px;top:524px;color:#e8f0ff;font-size:10px;font-weight:bold">A</div>
<div class="b" style="left:45px;top:530px;width:4px;height:4px;background:#fff"></div>
<svg width="1904" height="871" viewBox="0 0 1904 871" style="pointer-events:none">
<path d="M62.500 506.500l8.500 9-3.500 1 2 4-2.500 1-2-4-2.500 2.500z" fill="#333" stroke="#ddd" stroke-width=".9"/>
<path d="M63 525l9 9.500-3.500.5 2.500 5-2.500 1-2.500-5-3 3z" fill="#ddd"/>
<rect x="7" y="500" width="218.500" height="46.500" rx="2" fill="none" stroke="#ff1a1a" stroke-width="2.800"/>
</svg>
</body></html>
